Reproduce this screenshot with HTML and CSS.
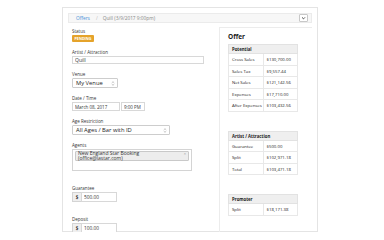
FILE: index.html
```html
<!DOCTYPE html>
<html lang="en">
<head>
  <meta charset="UTF-8" /><meta name="viewport" content="width=device-width, initial-scale=1.0" />
  <title>Offer – Quill</title>
  <link rel="stylesheet" href="styles.css">
</head>
<body>
  <div class="card">
    <div class="crumbs">
      <a class="crumb-link">Offers</a>
      <span class="sep">/</span>
      <span class="crumb-cur">Quill (3/9/2017 9:00pm)</span>
      <button class="toggle">
        <svg width="9" height="8" viewBox="0 0 9 8"><path d="M2.6 3.2 L4.5 5.1 L6.4 3.2" fill="none" stroke="#333" stroke-width="1.1" /></svg>
      </button>
    </div>

    <div class="body">
      <div class="form">
        <div class="field">
          <div class="lbl">Status</div>
          <span class="badge">PENDING</span>
        </div>
        <div class="field">
          <div class="lbl">Artist / Attraction</div>
          <input class="input artist" type="text" value="Quill" />
        </div>
        <div class="field">
          <div class="lbl">Venue</div>
          <div class="select venue">
            <span>My Venue</span>
            <svg width="4" height="5" viewBox="0 0 4 5"><path d="M0.8 1.8 L2 0.7 L3.2 1.8 M0.8 3.2 L2 4.3 L3.2 3.2" fill="none" stroke="#999" stroke-width="0.6" /></svg>
          </div>
        </div>
        <div class="field">
          <div class="lbl">Date / Time</div>
          <div class="row">
            <input class="input date" type="text" value="March 08, 2017" />
            <input class="input time" type="text" value="9:00 PM" />
          </div>
        </div>
        <div class="field">
          <div class="lbl">Age Restriction</div>
          <div class="select age">
            <span>All Ages / Bar with ID</span>
            <svg width="4" height="5" viewBox="0 0 4 5"><path d="M0.8 1.8 L2 0.7 L3.2 1.8 M0.8 3.2 L2 4.3 L3.2 3.2" fill="none" stroke="#999" stroke-width="0.6" /></svg>
          </div>
        </div>
        <div class="field spaced">
          <div class="lbl">Agents</div>
          <div class="agents">
            <div class="tag">
              <span>New England Star Booking<br>(office@lastar.com)</span>
              <span class="x">×</span>
            </div>
          </div>
        </div>
        <div class="field spaced">
          <div class="lbl">Guarantee</div>
          <div class="group">
            <span class="addon">$</span>
            <input class="input" type="text" value="500.00" />
          </div>
        </div>
        <div class="field">
          <div class="lbl">Deposit</div>
          <div class="group">
            <span class="addon">$</span>
            <input class="input" type="text" value="100.00" />
          </div>
        </div>
      </div>

      <aside class="summary">
        <h3>Offer</h3>
        <table class="money potential">
          <tr><th colspan="2">Potential</th></tr>
          <tr><td class="key">Cross Sales</td><td>$130,700.00</td></tr>
          <tr><td class="key">Sales Tax</td><td>$9,557.44</td></tr>
          <tr><td class="key">Net Sales</td><td>$121,142.56</td></tr>
          <tr><td class="key">Expenses</td><td>$17,710.00</td></tr>
          <tr><td class="key">After Expenses</td><td>$103,432.56</td></tr>
        </table>
        <table class="money artist">
          <tr><th colspan="2">Artist / Attraction</th></tr>
          <tr><td class="key">Guarantee</td><td>$500.00</td></tr>
          <tr><td class="key">Split</td><td>$102,971.18</td></tr>
          <tr><td class="key">Total</td><td>$103,471.18</td></tr>
        </table>
        <table class="money promoter">
          <tr><th colspan="2">Promoter</th></tr>
          <tr><td class="key">Split</td><td>$18,171.38</td></tr>
        </table>
      </aside>
    </div>
  </div>
</body>
</html>
```

FILE: styles.css
```css
* { box-sizing: border-box; }
body { margin: 0; background: #fff; font-family: "Open Sans", "Liberation Sans", Arial, sans-serif; color: #333; }

.card { margin: 7px 0 0 62px; width: 256px; height: 225px; border: 1px solid #e4e4e4; padding: 5px 5px 0 5px; display: flex; flex-direction: column; }

.crumbs { height: 14px; display: flex; align-items: center; background: #f7f7f7; border: 1px solid #ebebeb; padding: 0 3px 0 7px; font-size: 4.8px; }
.crumb-link { color: #4a90d9; }
.sep { color: #bbb; margin: 0 5px 0 6px; }
.crumb-cur { color: #888; }
.toggle { margin-left: auto; width: 9px; height: 8px; padding: 0; border: 1px solid #c8c8c8; border-radius: 1px; background: #fff; display: flex; align-items: center; justify-content: center; }
.toggle svg { display: block; }

.body { flex: 1; display: flex; margin-top: 4px; }
.form { flex: 1; padding-left: 4px; padding-top: 1px; }

.field { margin-bottom: 7px; }
.field.spaced { margin-bottom: 14px; }
.lbl { font-size: 4.5px; line-height: 6px; margin-bottom: 1px; color: #333; }

.badge { display: block; width: 22px; height: 7px; margin-top: 1px; background: #e5a32b; color: #fff; font-weight: 700; font-size: 3.7px; line-height: 7px; text-align: center; border-radius: 1px; }

.input { display: block; height: 8px; border: 1px solid #d8d8d8; font-family: inherit; font-size: 4.5px; color: #333; padding: 0 2px; margin: 0; background: #fff; outline: none; }
.input.artist { width: 132px; font-size: 5px; }
.row { display: flex; gap: 1px; }
.input.date { width: 48px; height: 9px; font-size: 4.5px; }
.input.time { width: 24px; height: 9px; font-size: 4.5px; }

.select { display: flex; align-items: center; justify-content: space-between; height: 10px; border: 1px solid #cdcdcd; border-radius: 1px; padding: 0 2px 0 3px; font-size: 5.8px; color: #222; background: #fff; }
.select svg { display: block; }
.select.venue { width: 46px; }
.select.age { width: 98px; }

.agents { width: 120px; height: 22px; border: 1px solid #d4d4d4; padding: 1px 2px; }
.tag { display: flex; justify-content: space-between; background: #ededed; border: 1px solid #c9c9c9; border-radius: 1px; padding: 0 2px; font-size: 5px; line-height: 4.7px; color: #333; height: 10px; align-items: center; }
.tag .x { color: #999; font-size: 4px; align-self: flex-start; }

.group { display: flex; width: 45px; height: 10px; }
.addon { width: 9px; background: #efefef; border: 1px solid #d4d4d4; border-right: 0; font-size: 4.5px; font-weight: 700; display: flex; align-items: center; justify-content: center; }
.group .input { flex: 1; height: 10px; width: 36px; font-size: 4.8px; }

.summary { width: 93px; border-left: 1px solid #ececec; border-top: 1px solid #ececec; padding: 5px 0 0 8px; }
.summary h3 { margin: 0 0 3px; font-size: 6.5px; line-height: 8px; font-weight: 700; color: #222; }

.money { width: 70px; border-collapse: collapse; font-size: 4.3px; margin-bottom: 19px; table-layout: fixed; color: #222; }
.money th { background: #efefef; text-align: left; font-weight: 700; height: 9px; padding: 0 3px; border: 1px solid #e2e2e2; }
.money td { height: 11.5px; padding: 0 3px; border: 1px solid #e8e8e8; white-space: nowrap; }
.money .key { width: 36px; }
.money.artist .key { width: 34px; }
.money.promoter .key { width: 27px; }
```
